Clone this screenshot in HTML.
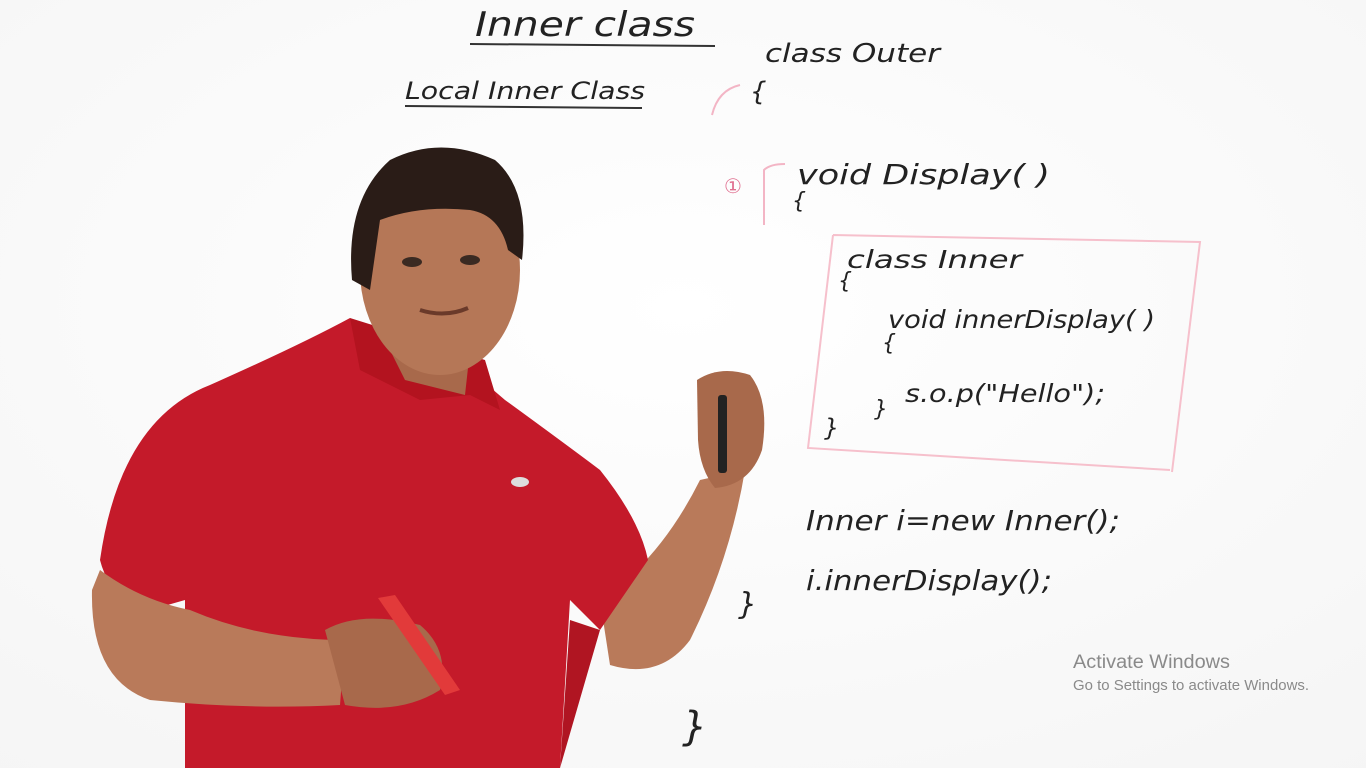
<!DOCTYPE html>
<html><head><meta charset="utf-8"><style>
html,body{margin:0;padding:0;width:1366px;height:768px;overflow:hidden;background:#fdfdfd}
svg{display:block}
.h{font-family:"DejaVu Sans","Liberation Sans",sans-serif;font-style:italic;fill:#222;font-weight:300}
</style></head><body>
<svg width="1366" height="768" viewBox="0 0 1366 768">
<defs>
<radialGradient id="bg" cx="0.5" cy="0.4" r="0.8"><stop offset="0" stop-color="#ffffff"/><stop offset="1" stop-color="#f5f5f5"/></radialGradient>
</defs>
<rect width="1366" height="768" fill="url(#bg)"/>
<text class="h" x="475" y="36" font-size="34" textLength="220" lengthAdjust="spacingAndGlyphs">Inner class</text>
<line x1="470" y1="44" x2="715" y2="46" stroke="#333" stroke-width="2"/>
<text class="h" x="405" y="99" font-size="24" textLength="240" lengthAdjust="spacingAndGlyphs">Local Inner Class</text>
<line x1="405" y1="106" x2="642" y2="108" stroke="#333" stroke-width="2"/>
<text class="h" x="765" y="62" font-size="26" textLength="175" lengthAdjust="spacingAndGlyphs">class Outer</text>
<text class="h" x="750" y="100" font-size="26">{</text>
<path d="M712 115 Q718 90 740 85" stroke="#f3b5c5" stroke-width="2" fill="none"/>
<text x="724" y="193" font-size="20" fill="#e07090" font-family="Liberation Sans">①</text>
<path d="M764 225 L764 170 Q770 164 785 164" stroke="#f3b5c5" stroke-width="2" fill="none"/>
<text class="h" x="797" y="184" font-size="28" textLength="253" lengthAdjust="spacingAndGlyphs">void  Display( )</text>
<text class="h" x="792" y="208" font-size="22">{</text>
<path d="M833 235 L1200 242 L1172 472 M833 235 L808 448 L1170 470" stroke="#f6c0cc" stroke-width="2" fill="none"/>
<text class="h" x="847" y="268" font-size="25" textLength="175" lengthAdjust="spacingAndGlyphs">class  Inner</text>
<text class="h" x="838" y="288" font-size="22">{</text>
<text class="h" x="888" y="328" font-size="25" textLength="267" lengthAdjust="spacingAndGlyphs">void  innerDisplay( )</text>
<text class="h" x="882" y="350" font-size="22">{</text>
<text class="h" x="905" y="402" font-size="25" textLength="200" lengthAdjust="spacingAndGlyphs">s.o.p("Hello");</text>
<text class="h" x="874" y="416" font-size="22">}</text>
<text class="h" x="824" y="436" font-size="24">}</text>
<text class="h" x="806" y="530" font-size="28" textLength="314" lengthAdjust="spacingAndGlyphs">Inner i=new Inner();</text>
<text class="h" x="806" y="590" font-size="28" textLength="246" lengthAdjust="spacingAndGlyphs">i.innerDisplay();</text>
<text class="h" x="738" y="614" font-size="30">}</text>
<text class="h" x="682" y="740" font-size="40">}</text>
<path d="M600 600 Q660 560 700 480 L745 470 Q730 560 690 640 Q660 680 610 665 Z" fill="#b97a5a"/>
<path d="M697 380 Q720 365 750 375 Q770 400 762 450 Q750 485 715 488 Q700 470 698 440 Z" fill="#a8694b"/>
<rect x="718" y="395" width="9" height="78" rx="3" fill="#222"/>
<path d="M100 560 Q120 420 210 385 Q300 345 350 318 L395 360 L470 370 L505 400 Q560 440 600 470 Q640 520 648 560 L600 630 L570 600 L560 768 L185 768 L185 600 L150 610 Q110 600 100 560 Z" fill="#c41a2a"/>
<path d="M560 768 L570 620 L600 630 Z" fill="#b01522"/>
<path d="M350 318 L360 370 L420 400 L470 395 L500 410 L485 360 Z" fill="#b3131f"/>
<path d="M92 590 Q90 680 150 700 Q250 710 340 705 L345 640 Q260 640 190 610 Q140 600 100 570 Z" fill="#b97a5a"/>
<path d="M325 630 Q360 610 420 625 Q450 650 440 690 Q400 715 345 705 Z" fill="#a8694b"/>
<path d="M378 598 L395 595 L460 690 L445 695 Z" fill="#e23a3a"/>
<path d="M375 320 Q420 370 470 350 L465 395 L405 380 Z" fill="#a8694b"/>
<ellipse cx="440" cy="270" rx="80" ry="105" fill="#b57757"/>
<path d="M352 280 Q345 200 390 160 Q440 135 495 160 Q530 190 522 260 L508 250 Q500 215 470 210 Q420 205 380 220 L370 290 Z" fill="#2a1c17"/>
<ellipse cx="412" cy="262" rx="10" ry="5" fill="#3a2a22"/>
<ellipse cx="470" cy="260" rx="10" ry="5" fill="#3a2a22"/>
<path d="M420 310 Q445 318 468 308" stroke="#6a3a2a" stroke-width="4" fill="none"/>
<ellipse cx="520" cy="482" rx="9" ry="5" fill="#ddd"/>
<text x="1073" y="668" font-family="Liberation Sans,sans-serif" font-size="19" fill="#8a8a8a" textLength="157" lengthAdjust="spacingAndGlyphs">Activate Windows</text>
<text x="1073" y="690" font-family="Liberation Sans,sans-serif" font-size="14.5" fill="#8a8a8a" textLength="236" lengthAdjust="spacingAndGlyphs">Go to Settings to activate Windows.</text>
</svg>
</body></html>
